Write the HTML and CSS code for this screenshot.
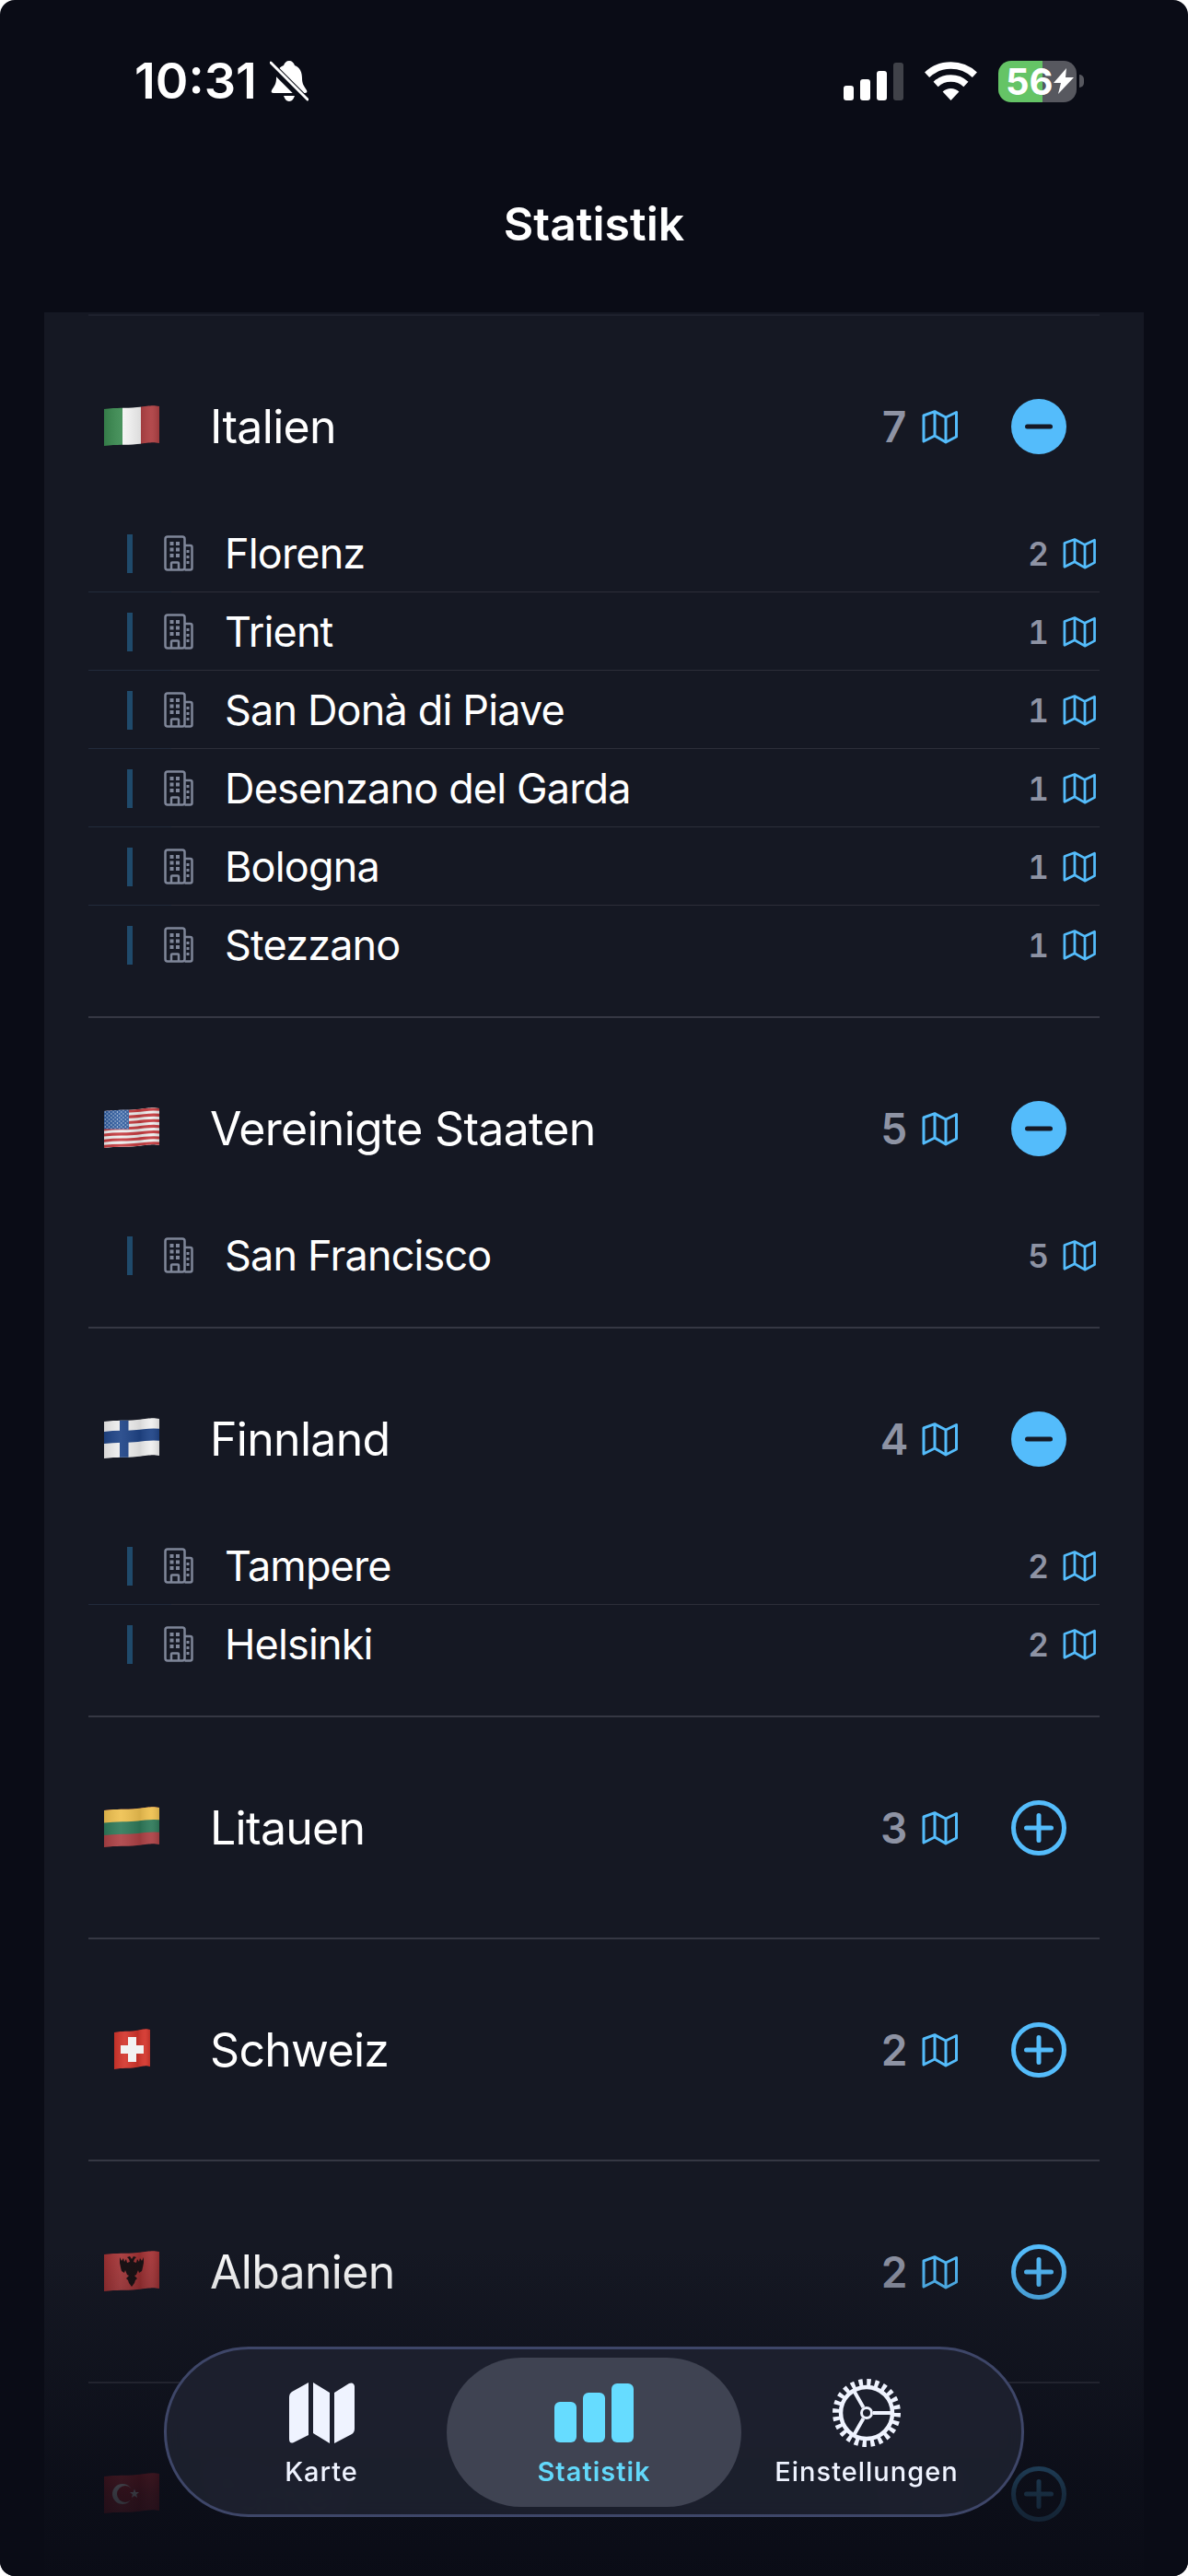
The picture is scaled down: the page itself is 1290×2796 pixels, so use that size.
FILE: index.html
```html
<!DOCTYPE html>
<html lang="de">
<head>
  <meta charset="UTF-8">
  <title>Statistik</title>
  <link rel="stylesheet" href="styles.css">
</head>
<body>
  <svg class="defs" aria-hidden="true">
    <defs>
      <clipPath id="wave"><path d="M0 4C15 2 22 3.500 36 2S52-.5 60 1V41C52 39.500 50 40.500 36 42C22 43.500 15 42 0 44Z"/></clipPath>
      <path id="wave-line" d="M-2 4.200C15 2 22 3.500 36 2S52-.5 62 1" fill="none"/>
      <linearGradient id="shade">
        <stop offset="0" stop-color="#000" stop-opacity=".1"/>
        <stop offset=".3" stop-color="#fff" stop-opacity=".08"/>
        <stop offset=".65" stop-color="#000" stop-opacity=".1"/>
        <stop offset=".85" stop-color="#fff" stop-opacity=".06"/>
        <stop offset="1" stop-color="#000" stop-opacity=".12"/>
      </linearGradient>
      <pattern id="stars" width="4.400" height="4" patternUnits="userSpaceOnUse">
        <circle cx="1.200" cy="1" r=".65" fill="#dfe6f2"/>
        <circle cx="3.400" cy="3" r=".65" fill="#dfe6f2"/>
      </pattern>

      <symbol id="map" viewBox="-1.500 -1 39 37">
        <path d="M.5 5 12.500.7l12 6.300L36 1.500V28l-11.500 6-12-7-12 6ZM12.500.7V27M24.500 7v27" fill="none" stroke="#54bcfb" stroke-width="3" stroke-linejoin="round"/>
      </symbol>
      <symbol id="building" viewBox="0 0 32 39">
        <g fill="none" stroke="#7f8699" stroke-width="2.500" stroke-linejoin="round">
          <rect x="1.500" y="1.500" width="21" height="36" rx="2.500"/>
          <path d="M22.500 11h6a2 2 0 0 1 2 2v22.500a2 2 0 0 1-2 2h-6M8 37.500v-7a1 1 0 0 1 1-1h6a1 1 0 0 1 1 1v7"/>
        </g>
        <path d="M6.500 7h4v4h-4zM13 7h4v4h-4zM6.500 13.500h4v4h-4zM13 13.500h4v4h-4zM6.500 20h4v4h-4zM13 20h4v4h-4zM24.500 16h3v3h-3zM24.500 22h3v3h-3zM24.500 28h3v3h-3z" fill="#7f8699"/>
      </symbol>
      <symbol id="minus" viewBox="0 0 60 60">
        <circle cx="30" cy="30" r="30" fill="#54bcfb"/>
        <rect x="15" y="27.500" width="30" height="5" rx="2.500" fill="#161925"/>
      </symbol>
      <symbol id="plus" viewBox="0 0 60 60">
        <circle cx="30" cy="30" r="27.500" fill="none" stroke="#54bcfb" stroke-width="5"/>
        <path d="M16.500 30h27M30 16.500v27" stroke="#54bcfb" stroke-width="5" stroke-linecap="round"/>
      </symbol>

      <symbol id="flag-it" viewBox="0 0 60 44">
        <g clip-path="url(#wave)">
          <rect width="20" height="44" fill="#3a8a50"/>
          <rect x="20" width="20" height="44" fill="#f6f6f6"/>
          <rect x="40" width="20" height="44" fill="#ae3f42"/>
          <rect width="60" height="44" fill="url(#shade)"/>
        </g>
      </symbol>
      <symbol id="flag-us" viewBox="0 0 60 44">
        <g clip-path="url(#wave)">
          <rect width="60" height="44" fill="#efefef"/>
          <g stroke="#c63c40" stroke-width="3.100">
            <use href="#wave-line" y="1.500"/>
            <use href="#wave-line" y="7.650"/>
            <use href="#wave-line" y="13.800"/>
            <use href="#wave-line" y="19.950"/>
            <use href="#wave-line" y="26.100"/>
            <use href="#wave-line" y="32.250"/>
            <use href="#wave-line" y="38.400"/>
          </g>
          <rect width="27" height="23.500" fill="#2f5c9f"/>
          <rect width="27" height="23.500" fill="url(#stars)"/>
          <rect width="60" height="44" fill="url(#shade)"/>
        </g>
      </symbol>
      <symbol id="flag-fi" viewBox="0 0 60 44">
        <g clip-path="url(#wave)">
          <rect width="60" height="44" fill="#efefef"/>
          <use href="#wave-line" y="17.500" stroke="#1f4487" stroke-width="13"/>
          <rect x="17" width="9.500" height="44" fill="#1f4487"/>
          <rect width="60" height="44" fill="url(#shade)"/>
        </g>
      </symbol>
      <symbol id="flag-lt" viewBox="0 0 60 44">
        <g clip-path="url(#wave)">
          <rect width="60" height="44" fill="#ad4145"/>
          <use href="#wave-line" y="20" stroke="#2f7a5a" stroke-width="14"/>
          <use href="#wave-line" y="6" stroke="#efc150" stroke-width="15"/>
          <rect width="60" height="44" fill="url(#shade)"/>
        </g>
      </symbol>
      <symbol id="flag-ch" viewBox="0 0 60 44">
        <g transform="translate(11 0) scale(.65 1)" clip-path="url(#wave)">
          <rect width="60" height="44" fill="#d4352c"/>
          <rect width="60" height="44" fill="url(#shade)"/>
        </g>
        <path d="M26 9h9v9h8v9h-8v9h-9v-9h-8v-9h8Z" fill="#f2f2f2"/>
      </symbol>
      <symbol id="flag-al" viewBox="0 0 60 44">
        <g clip-path="url(#wave)">
          <rect width="60" height="44" fill="#a83335"/>
          <rect width="60" height="44" fill="url(#shade)"/>
        </g>
        <path id="eagle" d="M30 9l2-3 3 1-2 2-1 3 3 1 1-4 2 3 1-4 2 3 2-4v6l-1 5-1 4-3 2-1-3-2 5-2 1 3 3-2 2-1 3-3 4Z" fill="#1a1214"/>
        <use href="#eagle" transform="translate(60 0) scale(-1 1)"/>
      </symbol>
      <symbol id="flag-tr" viewBox="0 0 60 44">
        <g clip-path="url(#wave)">
          <rect width="60" height="44" fill="#c7242d"/>
          <rect width="60" height="44" fill="url(#shade)"/>
        </g>
        <circle cx="20" cy="23" r="11" fill="#f4f4f4"/>
        <circle cx="23" cy="23" r="9" fill="#c7242d"/>
        <path d="M33 17.500l1.300 3.500 3.700.1-2.900 2.300 1 3.600-3.100-2.100-3.100 2.100 1-3.600-2.900-2.300 3.700-.1Z" fill="#f4f4f4"/>
      </symbol>
    </defs>
  </svg>

  <div class="screen">
    <div class="statusbar">
      <div class="status-left">
        <span class="time">10:31</span>
        <svg class="bell" viewBox="0 0 42 46">
          <path d="M21 1c3 0 5 2 6 5 6 2 8 8 8 14 0 6 2 8 5 13 1 2 0 3-2 3H4c-2 0-3-1-2-3 3-5 5-7 5-13 0-6 2-12 8-14 1-3 3-5 6-5ZM15 39h12c-1 3-3 6-6 6s-5-3-6-6Z" fill="#fff"/>
          <path d="M0 5l38 38" stroke="#0a0c16" stroke-width="9"/>
          <path d="M1 3l40 40" stroke="#fff" stroke-width="3" stroke-linecap="round"/>
        </svg>
      </div>
      <div class="status-right">
        <div class="signal">
          <span class="sig sig-1"></span>
          <span class="sig sig-2"></span>
          <span class="sig sig-3"></span>
          <span class="sig sig-4"></span>
        </div>
        <svg class="wifi" viewBox="0 0 57 42">
          <path d="M2.600 14.200A38 38 0 0 1 54.400 14.200M12.100 24.500A24 24 0 0 1 44.900 24.500" fill="none" stroke="#fff" stroke-width="7.500"/>
          <path d="M28.500 42 19.600 32.500A13 13 0 0 1 37.400 32.500Z" fill="#fff"/>
        </svg>
        <div class="battery">
          <span>56</span>
          <svg class="bolt" viewBox="0 0 22 28"><path d="M14 0 0 16h8l-3 12L22 10h-9Z" fill="#fff"/></svg>
        </div>
        <span class="battery-nub"></span>
      </div>
    </div>

    <h1 class="title">Statistik</h1>

    <div class="card">
      <div class="group open">
        <div class="country">
          <svg class="flag"><use href="#flag-it"/></svg>
          <span class="name">Italien</span>
          <span class="count">7</span>
          <svg class="map"><use href="#map"/></svg>
          <svg class="toggle"><use href="#minus"/></svg>
        </div>
        <div class="city"><span class="mark"></span><svg class="building"><use href="#building"/></svg><span class="city-name">Florenz</span><span class="city-count">2</span><svg class="map-small"><use href="#map"/></svg></div>
        <div class="city"><span class="mark"></span><svg class="building"><use href="#building"/></svg><span class="city-name">Trient</span><span class="city-count">1</span><svg class="map-small"><use href="#map"/></svg></div>
        <div class="city"><span class="mark"></span><svg class="building"><use href="#building"/></svg><span class="city-name">San Donà di Piave</span><span class="city-count">1</span><svg class="map-small"><use href="#map"/></svg></div>
        <div class="city"><span class="mark"></span><svg class="building"><use href="#building"/></svg><span class="city-name">Desenzano del Garda</span><span class="city-count">1</span><svg class="map-small"><use href="#map"/></svg></div>
        <div class="city"><span class="mark"></span><svg class="building"><use href="#building"/></svg><span class="city-name">Bologna</span><span class="city-count">1</span><svg class="map-small"><use href="#map"/></svg></div>
        <div class="city"><span class="mark"></span><svg class="building"><use href="#building"/></svg><span class="city-name">Stezzano</span><span class="city-count">1</span><svg class="map-small"><use href="#map"/></svg></div>
      </div>

      <div class="group open">
        <div class="country">
          <svg class="flag"><use href="#flag-us"/></svg>
          <span class="name">Vereinigte Staaten</span>
          <span class="count">5</span>
          <svg class="map"><use href="#map"/></svg>
          <svg class="toggle"><use href="#minus"/></svg>
        </div>
        <div class="city"><span class="mark"></span><svg class="building"><use href="#building"/></svg><span class="city-name">San Francisco</span><span class="city-count">5</span><svg class="map-small"><use href="#map"/></svg></div>
      </div>

      <div class="group open">
        <div class="country">
          <svg class="flag"><use href="#flag-fi"/></svg>
          <span class="name">Finnland</span>
          <span class="count">4</span>
          <svg class="map"><use href="#map"/></svg>
          <svg class="toggle"><use href="#minus"/></svg>
        </div>
        <div class="city"><span class="mark"></span><svg class="building"><use href="#building"/></svg><span class="city-name">Tampere</span><span class="city-count">2</span><svg class="map-small"><use href="#map"/></svg></div>
        <div class="city"><span class="mark"></span><svg class="building"><use href="#building"/></svg><span class="city-name">Helsinki</span><span class="city-count">2</span><svg class="map-small"><use href="#map"/></svg></div>
      </div>

      <div class="group">
        <div class="country">
          <svg class="flag"><use href="#flag-lt"/></svg>
          <span class="name">Litauen</span>
          <span class="count">3</span>
          <svg class="map"><use href="#map"/></svg>
          <svg class="toggle"><use href="#plus"/></svg>
        </div>
      </div>

      <div class="group">
        <div class="country">
          <svg class="flag"><use href="#flag-ch"/></svg>
          <span class="name">Schweiz</span>
          <span class="count">2</span>
          <svg class="map"><use href="#map"/></svg>
          <svg class="toggle"><use href="#plus"/></svg>
        </div>
      </div>

      <div class="group">
        <div class="country">
          <svg class="flag"><use href="#flag-al"/></svg>
          <span class="name">Albanien</span>
          <span class="count">2</span>
          <svg class="map"><use href="#map"/></svg>
          <svg class="toggle"><use href="#plus"/></svg>
        </div>
      </div>

      <div class="group">
        <div class="country">
          <svg class="flag"><use href="#flag-tr"/></svg>
          <span class="name">Türkei</span>
          <span class="count">2</span>
          <svg class="map"><use href="#map"/></svg>
          <svg class="toggle"><use href="#plus"/></svg>
        </div>
      </div>
    </div>

    <div class="fade"></div>

    <nav class="tabbar">
      <div class="tab">
        <div class="tab-icon">
          <svg class="icon-map" viewBox="0 0 71 66">
            <path d="M21 0V57L5 65Q0 67 0 61V16Q0 12 3 10ZM26 0 44 11V66L26 55ZM49 11 65 1Q70-1 71 4V50Q71 54 68 56L49 66Z" fill="#eff3ff"/>
          </svg>
        </div>
        <span class="tab-label">Karte</span>
      </div>
      <div class="tab active">
        <div class="tab-icon">
          <div class="bars">
            <span class="bar bar-1"></span>
            <span class="bar bar-2"></span>
            <span class="bar bar-3"></span>
          </div>
        </div>
        <span class="tab-label">Statistik</span>
      </div>
      <div class="tab">
        <div class="tab-icon">
          <svg class="icon-gear" viewBox="-38 -38 76 76">
            <g fill="none" stroke="#eff3ff">
              <circle r="33" stroke-width="8" stroke-dasharray="4.320 4.320"/>
              <circle r="28" stroke-width="4.500"/>
              <circle r="5.500" stroke-width="3"/>
              <path d="M7 0H27M-3.500-6.100-13.500-23.400M-3.500 6.100-13.500 23.400" stroke-width="4"/>
            </g>
          </svg>
        </div>
        <span class="tab-label">Einstellungen</span>
      </div>
    </nav>
  </div>
</body>
</html>
```

FILE: styles.css
```css
html {
  background: #fff;
}
body {
  margin: 0;
  font-family: Inter, "Noto Sans", sans-serif;
  color: #fff;
}
.defs {
  display: block;
  width: 0;
  height: 0;
}
.screen {
  position: relative;
  width: 1290px;
  height: 2796px;
  overflow: hidden;
  border-radius: 16px;
  background: #0a0c16;
}

/* status bar */
.statusbar {
  height: 176px;
  display: flex;
  justify-content: space-between;
  align-items: center;
  padding: 0 113px 0 146px;
  box-sizing: border-box;
}
.status-left {
  display: flex;
  align-items: center;
  gap: 14px;
}
.time {
  font-size: 54px;
  font-weight: 600;
  color: #fff;
  line-height: 60px;
}
.bell {
  width: 42px;
  height: 46px;
}
.status-right {
  display: flex;
  align-items: center;
}
.signal {
  display: flex;
  align-items: flex-end;
  gap: 7px;
  height: 41px;
}
.sig {
  width: 11px;
  border-radius: 3px;
  background: #fff;
}
.sig-1 { height: 16px; }
.sig-2 { height: 23px; }
.sig-3 { height: 32px; }
.sig-4 { height: 41px; background: #404249; }
.wifi {
  width: 57px;
  height: 42px;
  margin-left: 23px;
}
.battery {
  width: 85px;
  height: 45px;
  margin-left: 23px;
  display: flex;
  align-items: center;
  padding-left: 8px;
  box-sizing: border-box;
  border-radius: 14px;
  background: linear-gradient(to right, #65c466 57%, #57585f 57%);
  font-size: 40px;
  font-weight: 700;
  color: #fff;
}
.bolt {
  width: 22px;
  height: 28px;
}
.battery-nub {
  width: 5px;
  height: 14px;
  margin-left: 3px;
  border-radius: 0 5px 5px 0;
  background: #57585f;
}

.title {
  margin: 0 0 29px;
  height: 134px;
  line-height: 134px;
  text-align: center;
  font-size: 50px;
  font-weight: 600;
  color: #fff;
}

/* list */
.card {
  height: 2457px;
  margin: 0 48px;
  padding: 2px 48px 0;
  background: #151823;
  box-sizing: border-box;
}
.group {
  padding-bottom: 24px;
  border-top: 2px solid #353743;
}
.card .group:first-child {
  border-top-color: #1e212d;
}
.group.open {
  padding-bottom: 35px;
}
.country {
  height: 84px;
  margin: 78px 36px 53px 17px;
  display: flex;
  align-items: center;
}
.flag {
  width: 60px;
  height: 44px;
  margin-top: -3px;
}
.name {
  flex: 1;
  margin-left: 55px;
  font-size: 50px;
  letter-spacing: -0.7px;
}
.count {
  font-size: 46px;
  font-weight: 600;
  font-variant-numeric: tabular-nums;
  color: #8e93a4;
}
.map {
  width: 39px;
  height: 37px;
  margin-left: 15px;
}
.toggle {
  width: 60px;
  height: 60px;
  margin-left: 58px;
}
.city {
  height: 85px;
  display: flex;
  align-items: center;
  padding: 0 4px 0 42px;
  background: linear-gradient(to right, #222b3b 90px, #2c2e39 90px) bottom / 100% 1px no-repeat;
}
.city:last-child {
  background: none;
}
.mark {
  width: 6px;
  height: 42px;
  background: #1f4a6b;
}
.building {
  width: 32px;
  height: 39px;
  margin-left: 34px;
}
.city-name {
  flex: 1;
  margin-left: 34px;
  font-size: 45px;
  letter-spacing: -0.85px;
}
.city-count {
  font-size: 35px;
  font-weight: 600;
  font-variant-numeric: tabular-nums;
  color: #8e93a4;
}
.map-small {
  width: 36px;
  height: 34px;
  margin-left: 15px;
}

/* fades the list out behind the tab bar */
.fade {
  position: absolute;
  left: 0;
  right: 0;
  bottom: 0;
  height: 356px;
  background: linear-gradient(to bottom, rgba(10, 12, 22, 0), rgba(10, 12, 22, 0.82) 75%, rgba(10, 12, 22, 0.96));
}

/* tab bar */
.tabbar {
  position: absolute;
  left: 178px;
  top: 2547px;
  width: 934px;
  height: 185px;
  box-sizing: border-box;
  display: flex;
  padding: 9px 20px 8px;
  border: 3px solid #3e4668;
  border-radius: 92px;
  background: rgba(29, 32, 46, 0.93);
  backdrop-filter: blur(10px);
}
.tab {
  width: 296px;
  display: flex;
  flex-direction: column;
  align-items: center;
  padding-top: 27px;
  box-sizing: border-box;
}
.tab.active {
  width: 320px;
  margin: 0 -12px;
  border-radius: 81px;
  background: #3f4352;
}
.tab-icon {
  height: 66px;
  display: flex;
  align-items: center;
}
.tab-label {
  margin-top: 14px;
  line-height: 34px;
  font-size: 29px;
  font-weight: 500;
  letter-spacing: 1px;
  color: #eff3ff;
}
.active .tab-label {
  font-weight: 600;
  color: #62d8fa;
}
.icon-map {
  width: 71px;
  height: 66px;
}
.icon-gear {
  width: 76px;
  height: 76px;
}
.bars {
  display: flex;
  align-items: flex-end;
  gap: 7px;
}
.bar {
  width: 24px;
  border-radius: 6px;
  background: #66dcff;
}
.bar-1 { height: 44px; }
.bar-2 { height: 54px; }
.bar-3 { height: 64px; }
```
